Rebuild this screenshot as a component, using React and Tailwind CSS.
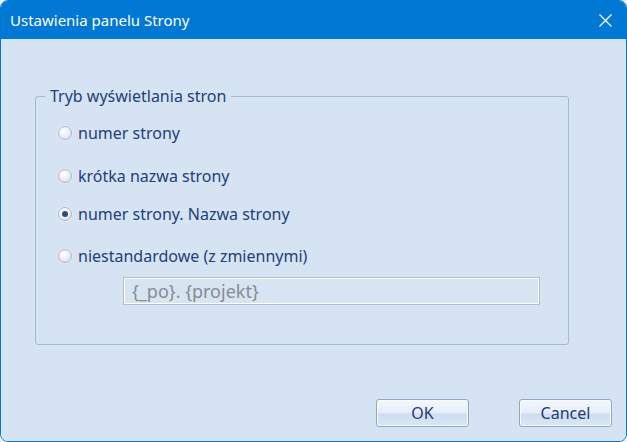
function Radio({ checked, label, className }) {
  return (
    <label className={`flex items-center gap-[6px] leading-[20px] ${className}`}>
      <span className="ml-[1px] w-[14px] h-[14px] rounded-full border border-[#b1bac6] bg-[radial-gradient(circle_at_40%_35%,#ffffff_0%,#eceff3_50%,#c8d0da_100%)] flex items-center justify-center shadow-[0_0_0_1px_#e3eaf3]">
        {checked && <span className="w-[6px] h-[6px] rounded-full bg-[#2b4a86]" />}
      </span>
      <span>{label}</span>
    </label>
  );
}

function Button({ children }) {
  return (
    <button className="w-[93px] h-[28px] rounded-[3px] border border-[#8fa8c9] bg-[linear-gradient(#f4f8fd_0%,#e6eef9_48%,#cddef2_55%,#dae6f5_100%)] shadow-[inset_0_0_0_1px_#f7fbff] text-[#1e3c6e] text-[16px] leading-[20px]">
      {children}
    </button>
  );
}

export default function App() {
  const options = [
    { label: "numer strony", mt: "mt-[17px]" },
    { label: "krótka nazwa strony", mt: "mt-[23px]" },
    { label: "numer strony. Nazwa strony", mt: "mt-[18px]", checked: true },
    { label: "niestandardowe (z zmiennymi)", mt: "mt-[22px]" },
  ];

  return (
    <div className="w-[627px] h-[442px] bg-[#eef0f2] font-['Noto_Sans',sans-serif]">
      <div className="h-full flex flex-col rounded-[8px] border border-[#0078d4] overflow-hidden">
        {/* Title bar */}
        <div className="h-[38px] shrink-0 bg-[#0078d4] flex items-center justify-between pl-[9px] pr-[14px] text-white text-[15px]">
          <span>Ustawienia panelu Strony</span>
          <svg width="13" height="13" viewBox="0 0 13 13" stroke="white" strokeWidth="1.2" fill="none">
            <path d="M0.5 0.5 L12.5 12.5 M12.5 0.5 L0.5 12.5" />
          </svg>
        </div>

        {/* Body */}
        <div className="flex-1 bg-[#d5e3f2] flex flex-col">
          <fieldset className="ml-[34px] mt-[47px] w-[534px] h-[259px] border border-[#a6b9d2] rounded-[3px] text-[#22407a] text-[16px]">
            <legend className="ml-[9px] px-[5px] leading-[20px]">Tryb wyświetlania stron</legend>
            <div className="pl-[21px]">
              {options.map((o) => (
                <Radio key={o.label} label={o.label} checked={o.checked} className={o.mt} />
              ))}
              <div className="mt-[11px] ml-[66px] w-[417px] h-[28px] border border-[#b7bec8] shadow-[inset_0_0_0_1px_#ffffff] bg-[#d7e4f1] flex items-center px-[8px] text-[#858b94] text-[18px]">
                {"{_po}. {projekt}"}
              </div>
            </div>
          </fieldset>

          <div className="mt-[54px] flex justify-end gap-[50px] pr-[14px]">
            <Button>OK</Button>
            <Button>Cancel</Button>
          </div>
        </div>
      </div>
    </div>
  );
}
